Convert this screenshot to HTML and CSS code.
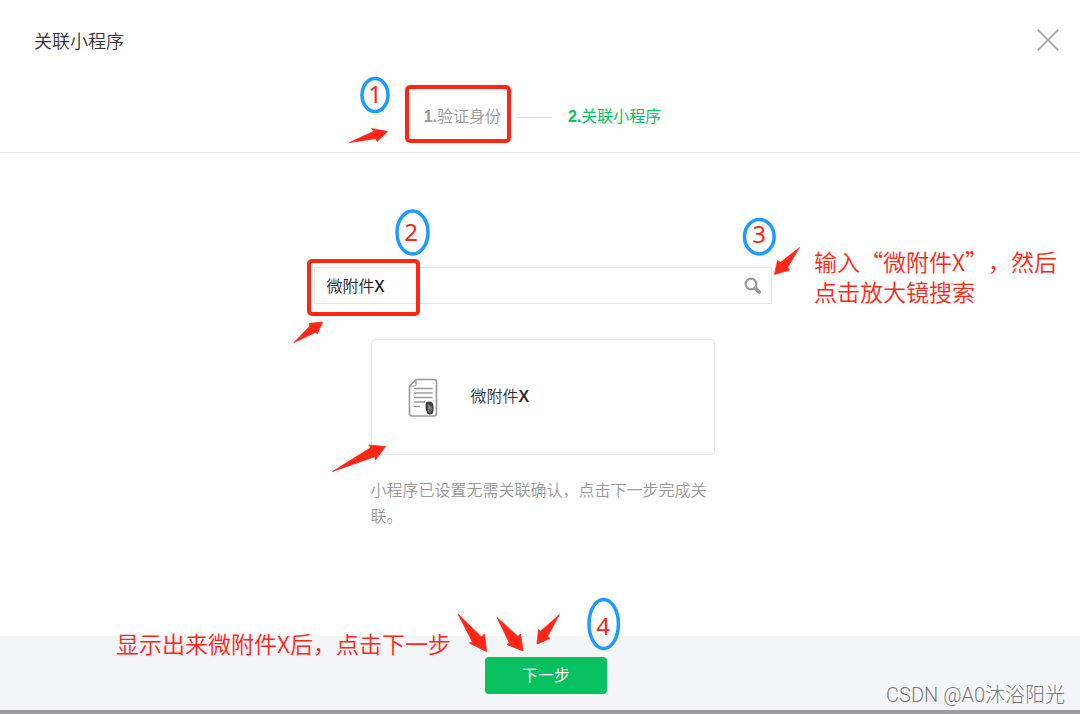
FILE: index.html
```html
<!DOCTYPE html>
<html lang="zh-CN">
<head>
    <meta charset="UTF-8">
    <meta name="viewport" content="width=device-width, initial-scale=1.0">
    <title>关联小程序</title>
    <link rel="stylesheet" href="styles.css">
</head>
<body>
    <div class="dialog">
        <header class="dialog-header">
            <h1 class="title">关联小程序</h1>
            <button class="close" type="button" aria-label="关闭">
                <svg width="22" height="22" viewBox="0 0 22 22"><path d="M1 1L21 21M21 1L1 21" stroke="#999" stroke-width="1.6"/></svg>
            </button>
        </header>

        <div class="steps">
            <span class="step"><b>1.</b>验证身份</span>
            <span class="step-line"></span>
            <span class="step active"><b>2.</b>关联小程序</span>
        </div>

        <main class="content">
            <form class="search">
                <input class="search-input" type="text" aria-label="搜索小程序" value="微附件X">
                <button class="search-btn" type="button" aria-label="搜索">
                    <svg width="18" height="18" viewBox="0 0 18 18" fill="none">
                        <circle cx="7" cy="7" r="5.4" stroke="#999" stroke-width="2.2"/>
                        <path d="M11.2 11.2L15.4 15" stroke="#999" stroke-width="3.6" stroke-linecap="round"/>
                    </svg>
                </button>
            </form>

            <div class="card">
                <svg class="card-icon" width="30" height="40" viewBox="0 0 30 40" fill="none">
                    <path d="M8 1.5H26Q28.5 1.5 28.5 4V35.5Q28.5 38 26 38H4Q1.5 38 1.5 35.5V8Z" stroke="#999" stroke-width="1.6" stroke-linejoin="round"/>
                    <path d="M8 1.5V6.5Q8 8 6.5 8H1.5" stroke="#999" stroke-width="1.2"/>
                    <path d="M6 10.5H24.5M6 15H24.5M6 19.5H24.5M6 24H17M6 28.5H12" stroke="#999" stroke-width="1.5"/>
                    <path d="M18.2 26.5Q18.2 24 21 24Q24.8 24 24.8 28V32.5Q24.8 36 22 36Q19.2 36 19.2 33Q18.2 32.500 18.2 30Z" fill="#444" stroke="#333" stroke-width="1.2"/>
                    <path d="M20.4 26.500V31.5Q20.4 34.2 22 34.2Q23.300 34.200 23.300 31.500V28.500" stroke="#aaa" stroke-width="0.7"/>
                    <path d="M21.8 27.5V31.5" stroke="#ddd" stroke-width="0.7"/>
                </svg>
                <span class="card-name">微附件<b>X</b></span>
            </div>

            <p class="tip">小程序已设置无需关联确认，点击下一步完成关联。</p>
        </main>

        <footer class="dialog-footer">
            <button class="next" type="button">下一步</button>
            <span class="watermark">CSDN @A0沐浴阳光</span>
        </footer>
    </div>

    <!-- walkthrough marks drawn over the dialog -->
    <div class="notes">
        <svg class="marks" width="1080" height="714" viewBox="0 0 1080 714">
            <g fill="none" stroke="#ff2616" stroke-width="4">
                <rect x="407" y="87" width="102" height="54" rx="3"/>
                <rect x="309" y="261" width="109" height="53" rx="3"/>
            </g>
            <g fill="none" stroke="#1e9bff" stroke-width="3.5">
                <ellipse cx="375" cy="95" rx="13" ry="16.5"/>
                <ellipse cx="412.5" cy="232.5" rx="15.5" ry="21.5"/>
                <ellipse cx="759.3" cy="236.7" rx="14.8" ry="17.3"/>
                <ellipse cx="603.7" cy="624" rx="14.7" ry="24.5"/>
            </g>
            <g fill="#ff2616" stroke="#ff2616" stroke-width="0.8" stroke-linejoin="round">
                <path d="M349.5 142.5L374.5 131L371.5 128.5L387.5 131.5L377 141.5L376 138.5Z"/>
                <path d="M294 342.5L310 326L309 323.5L322.5 322L317.5 333.5L315 332.5Z"/>
                <path d="M799.5 247.5L780.5 262.5L777.5 260.5L774.5 274.5L789.5 270L787.5 267.5Z"/>
                <path d="M332.5 471.5L371 447.5L368.5 445L385.5 446.5L375.5 460L375 456.5Z"/>
                <path d="M458 614L472.5 642L469.5 643L486.5 651.5L484.5 634L481.5 637Z"/>
                <path d="M497 617.5L509.5 643L507 644.5L523 651L520.5 634L518 636.5Z"/>
                <path d="M559.5 614.5L540.5 631.5L538.5 629.5L537 644L550 638.5L547.5 636.5Z"/>
            </g>
        </svg>
        <span class="num num-1">1</span>
        <span class="num num-2">2</span>
        <span class="num num-3">3</span>
        <span class="num num-4">4</span>
        <p class="note note-search">输入“微附件X”，然后<br>点击放大镜搜索</p>
        <p class="note note-next">显示出来微附件X后，点击下一步</p>
    </div>
</body>
</html>
```
FILE: styles.css
```css
* {
    box-sizing: border-box;
}
body {
    margin: 0;
    position: relative;
    min-height: 100vh;
    background-color: #fff;
    font-family: "Liberation Sans", "Noto Sans CJK SC", sans-serif;
    font-size: 16px;
    font-weight: 350;
    color: #333;
}
b {
    font-weight: 700;
}
button {
    border: none;
    background: none;
    padding: 0;
    font-family: inherit;
    font-weight: 400;
    cursor: pointer;
}
svg {
    display: block;
}
.dialog {
    display: flex;
    flex-direction: column;
    min-height: 100vh;
    border-bottom: 4px solid #9c9c9c;
}

/* Header */
.dialog-header {
    display: flex;
    justify-content: space-between;
    align-items: center;
    height: 80px;
    padding: 0 21px 0 34px;
}
.title {
    margin: 0;
    font-size: 18px;
    font-weight: 350;
}
.steps {
    display: flex;
    justify-content: center;
    align-items: center;
    gap: 16px;
    height: 73px;
    padding: 0 0 2px 5px;
    border-bottom: 1px solid #e4e7e9;
    color: #999;
}
.active {
    color: #07c160;
    font-weight: 400;
}
.step-line {
    width: 35px;
    height: 1px;
    margin-top: 4px;
    background-color: #dfe1e4;
}

/* Content */
.content {
    flex: 1;
    display: flex;
    flex-direction: column;
    align-items: center;
    padding: 114px 0 0 5px;
}
.search {
    display: flex;
    align-items: center;
    width: 458px;
    height: 37px;
    border: 1px solid #e7e7eb;
}
.search-input {
    flex: 1;
    border: none;
    outline: none;
    padding: 0 12px 2px;
    background: none;
    font-family: "Open Sans SemiBold", "Noto Sans SemiBold", "Liberation Sans", "Noto Sans CJK SC", sans-serif;
    font-size: 16px;
    font-weight: 350;
    color: #222;
}
.search-btn {
    padding: 0 9px;
}
.card {
    display: flex;
    align-items: center;
    gap: 33px;
    width: 344px;
    height: 116px;
    margin-top: 35px;
    padding: 2px 36px 0;
    border: 1px solid #e7e7eb;
    border-radius: 4px;
}
.card-name {
    padding-bottom: 6px;
}
.tip {
    width: 344px;
    margin: 23px 0 0;
    line-height: 26px;
    color: #999;
}

/* Footer */
.dialog-footer {
    position: relative;
    display: flex;
    justify-content: center;
    align-items: center;
    height: 74px;
    padding: 4px 0 0 12px;
    background-color: #f4f5f9;
}
.next {
    width: 122px;
    height: 37px;
    padding-bottom: 2px;
    border-radius: 4px;
    background-color: #07c160;
    color: #fff;
    font-size: 16px;
}
.watermark {
    position: absolute;
    right: 15px;
    bottom: 0;
    font-family: Roboto, "Noto Sans CJK SC", sans-serif;
    font-size: 20px;
    font-weight: 300;
    line-height: 30px;
    color: #77787a;
    text-shadow: -1px -1px 0 #fff;
}

/* Marks */
.notes {
    position: absolute;
    top: 0;
    left: 50%;
    width: 1080px;
    margin-left: -540px;
    pointer-events: none;
    color: #ff2616;
    font-weight: 400;
}
.num {
    position: absolute;
    width: 30px;
    font-family: "Noto Sans", sans-serif;
    font-size: 24px;
    line-height: 30px;
    text-align: center;
}
.num-1 {
    left: 360px;
    top: 79px;
}
.num-2 {
    left: 396px;
    top: 217px;
}
.num-3 {
    left: 744px;
    top: 219px;
}
.num-4 {
    left: 588px;
    top: 611px;
}
.note {
    position: absolute;
    margin: 0;
    font-family: "Noto Sans CJK SC", sans-serif;
    font-size: 23px;
    font-weight: 350;
    line-height: 30px;
    text-spacing-trim: space-all;
    white-space: nowrap;
}
.note-search {
    left: 814px;
    top: 246px;
}
.note-next {
    left: 116px;
    top: 628px;
}
```
